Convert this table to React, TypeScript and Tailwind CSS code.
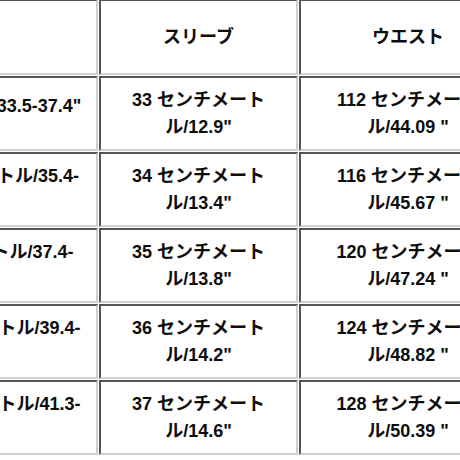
const rows = [
  {
    chest: (
      <>
        85-95 センチメートル/33.5-37.4"
      </>
    ),
    chestLift: true,
    sleeve: '33 センチメートル/12.9"',
    waist: '112 センチメートル/44.09 "',
  },
  {
    chest: (
      <>
        約: 90-100 センチメートル/35.4-<wbr />39.4"
      </>
    ),
    sleeve: '34 センチメートル/13.4"',
    waist: '116 センチメートル/45.67 "',
  },
  {
    chest: (
      <>
        約95-105 センチメートル/37.4-<wbr />41.3"
      </>
    ),
    sleeve: '35 センチメートル/13.8"',
    waist: '120 センチメートル/47.24 "',
  },
  {
    chest: (
      <>
        約 100-110 センチメートル/39.4-<wbr />43.3"
      </>
    ),
    sleeve: '36 センチメートル/14.2"',
    waist: '124 センチメートル/48.82 "',
  },
  {
    chest: (
      <>
        約 105-115 センチメートル/41.3-<wbr />45.3"
      </>
    ),
    sleeve: '37 センチメートル/14.6"',
    waist: '128 センチメートル/50.39 "',
  },
];

const cell =
  "border-2 border-t-[#555] border-l-[#555] border-r-[#cfcfcf] border-b-[#cfcfcf] text-center align-middle font-bold text-[18px] leading-[27px] text-[#0d0d0d]";

export default function App() {
  return (
    <div
      className="w-[460px] h-[460px] overflow-hidden bg-white"
      style={{ fontFamily: '"Liberation Sans", "Noto Sans CJK JP", sans-serif' }}
    >
      <table className="table-fixed border-separate border-spacing-[1px] w-[721px] -ml-[203px] -mt-[2px]">
        <colgroup>
          <col className="w-[300px]" />
          <col className="w-[199px]" />
          <col className="w-[218px]" />
        </colgroup>
        <thead>
          <tr>
            <th className={cn(cell, "h-[76px] px-[12px]")}>バスト</th>
            <th className={cn(cell, "h-[76px] px-[26px]")}>スリーブ</th>
            <th className={cn(cell, "h-[76px] px-[31px]")}>ウエスト</th>
          </tr>
        </thead>
        <tbody>
          {rows.map((row, i) => (
            <tr key={i}>
              <td className={cn(cell, "h-[75px] px-[12px]", row.chestLift && "pb-[15px]")}>{row.chest}</td>
              <td className={cn(cell, "h-[75px] px-[26px]")}>{row.sleeve}</td>
              <td className={cn(cell, "h-[75px] px-[31px]")}>{row.waist}</td>
            </tr>
          ))}
        </tbody>
      </table>
    </div>
  );
}

function cn(...parts: (string | false | undefined)[]) {
  return parts.filter(Boolean).join(" ");
}
